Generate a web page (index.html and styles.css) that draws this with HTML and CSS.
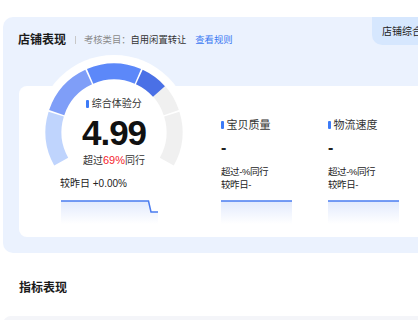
FILE: index.html
```html
<!DOCTYPE html>
<html lang="zh">
<head>
<meta charset="utf-8">
<title>店铺表现</title>
<link rel="stylesheet" href="styles.css">
</head>
<body>
<div class="page">
  <section class="panel">
    <div class="panel-head">
      <div class="head-left">
        <h2 class="title">店铺表现</h2>
        <span class="sep"></span>
        <span class="cat"><span class="cat-label">考核类目：</span>自用闲置转让</span>
        <a class="rule-link">查看规则</a>
      </div>
      <div class="tab">店铺综合</div>
    </div>
    <div class="card">
      <div class="gauge-col">
        <div class="gauge">
          <svg class="gauge-svg" width="154" height="118" viewBox="0 0 154 118">
            <circle cx="77" cy="77" r="77" fill="#ffffff"/>
            <g fill="none" stroke-width="16">
              <path d="M24.21 106.56 A60.5 60.5 0 0 1 19.22 59.06" stroke="#bfd4fd"/>
              <path d="M19.71 57.56 A60.5 60.5 0 0 1 51.67 22.06" stroke="#7f9ef8"/>
              <path d="M53.12 21.41 A60.5 60.5 0 0 1 100.88 21.41" stroke="#5c88f9"/>
              <path d="M102.33 22.06 A60.5 60.5 0 0 1 134.29 57.56" stroke="#f0f0f0"/>
              <path d="M102.33 22.06 A60.5 60.5 0 0 1 121.96 36.52" stroke="#4a70e6"/>
              <path d="M134.78 59.06 A60.5 60.5 0 0 1 129.79 106.56" stroke="#f0f0f0"/>
            </g>
          </svg>
          <div class="gauge-text">
            <div class="g-label"><span class="mark"></span>综合体验分</div>
            <div class="g-score">4.99</div>
            <div class="g-rank">超过<span class="red">69%</span>同行</div>
          </div>
        </div>
        <div class="delta">较昨日 +0.00%</div>
        <svg class="spark" width="100" height="27" viewBox="0 0 100 27">
          <defs>
            <linearGradient id="sg" x1="0" y1="0" x2="0" y2="1">
              <stop offset="0" stop-color="#4a7cf0" stop-opacity="0.16"/>
              <stop offset="1" stop-color="#4a7cf0" stop-opacity="0"/>
            </linearGradient>
          </defs>
          <path d="M0 4 H87.5 L90 15 H97 V27 H0 Z" fill="url(#sg)"/>
          <path d="M0 4 H87.5 L90 15 H97" fill="none" stroke="#4a7cf0" stroke-width="1.5"/>
        </svg>
      </div>
      <div class="metric">
        <div class="m-title"><span class="mark"></span>宝贝质量</div>
        <div class="m-value">-</div>
        <div class="m-line">超过-%同行</div>
        <div class="m-line">较昨日-</div>
        <svg class="m-chart" width="71" height="27" viewBox="0 0 71 27">
          <defs>
            <linearGradient id="mg1" x1="0" y1="0" x2="0" y2="1">
              <stop offset="0" stop-color="#4a7cf0" stop-opacity="0.16"/>
              <stop offset="1" stop-color="#4a7cf0" stop-opacity="0"/>
            </linearGradient>
          </defs>
          <path d="M0 4 H71 V27 H0 Z" fill="url(#mg1)"/>
          <path d="M0 4 H71" fill="none" stroke="#4a7cf0" stroke-width="1.5"/>
        </svg>
      </div>
      <div class="metric">
        <div class="m-title"><span class="mark"></span>物流速度</div>
        <div class="m-value">-</div>
        <div class="m-line">超过-%同行</div>
        <div class="m-line">较昨日-</div>
        <svg class="m-chart" width="71" height="27" viewBox="0 0 71 27">
          <defs>
            <linearGradient id="mg2" x1="0" y1="0" x2="0" y2="1">
              <stop offset="0" stop-color="#4a7cf0" stop-opacity="0.16"/>
              <stop offset="1" stop-color="#4a7cf0" stop-opacity="0"/>
            </linearGradient>
          </defs>
          <path d="M0 4 H71 V27 H0 Z" fill="url(#mg2)"/>
          <path d="M0 4 H71" fill="none" stroke="#4a7cf0" stroke-width="1.5"/>
        </svg>
      </div>
    </div>
  </section>
  <h3 class="section-title">指标表现</h3>
  <div class="grey-bar"></div>
</div>
</body>
</html>
```
FILE: styles.css
```css
html, body {
  margin: 0;
  padding: 0;
  background: #ffffff;
}
body {
  width: 418px;
  height: 320px;
  overflow: hidden;
  font-family: "Liberation Sans", "Noto Sans CJK SC", sans-serif;
  color: #333333;
}
.page {
  width: 418px;
}
.panel {
  margin: 17px 0 0 3px;
  width: 415px;
  box-sizing: border-box;
  padding: 0 0 16px 15px;
  background: #ebf2fe;
  border-radius: 10px 0 0 10px;
}
.panel-head {
  display: flex;
  justify-content: space-between;
  align-items: flex-start;
}
.head-left {
  display: flex;
  align-items: center;
  margin-top: 16px;
  height: 14px;
}
.title {
  margin: 0;
  font-size: 12px;
  line-height: 14px;
  font-weight: 700;
  color: #1a1a1a;
}
.sep {
  width: 1px;
  height: 8px;
  background: #c8c8c8;
  margin: 0 8px 0 9px;
}
.cat {
  font-size: 9.3px;
  line-height: 14px;
  color: #333333;
}
.cat-label {
  color: #8a8a8a;
}
.rule-link {
  margin-left: 9px;
  font-size: 9.3px;
  line-height: 14px;
  color: #3a78f2;
}
.tab {
  flex-shrink: 0;
  width: 46px;
  height: 28px;
  box-sizing: border-box;
  padding: 8px 0 0 10px;
  background: #d6e7fe;
  border-radius: 0 0 0 10px;
  font-size: 10px;
  line-height: 14px;
  color: #222222;
  white-space: nowrap;
  overflow: hidden;
}
.card {
  margin: 39px 0 0 1px;
  background: #ffffff;
  border-radius: 8px 0 0 8px;
  display: flex;
  align-items: flex-start;
  padding: 0 0 13px 18px;
}
.gauge-col {
  flex-shrink: 0;
  width: 154px;
  margin-top: -31px;
  display: flex;
  flex-direction: column;
}
.gauge {
  display: grid;
  width: 154px;
  height: 118px;
}
.gauge-svg,
.gauge-text {
  grid-area: 1 / 1;
}
.gauge-svg {
  display: block;
}
.gauge-text {
  padding-top: 42px;
  text-align: center;
}
.g-label {
  display: flex;
  align-items: center;
  justify-content: center;
  font-size: 10px;
  line-height: 14px;
  color: #333333;
}
.mark {
  display: inline-block;
  width: 2.5px;
  height: 8px;
  border-radius: 1px;
  background: #3d7bf7;
  margin-right: 3px;
}
.g-score {
  margin-top: 4px;
  font-size: 35px;
  line-height: 36px;
  font-weight: 700;
  letter-spacing: -1px;
  color: #111111;
}
.g-rank {
  margin-top: 2px;
  font-size: 10px;
  line-height: 14px;
  color: #333333;
}
.red {
  color: #f5222d;
  font-size: 11px;
}
.delta {
  margin: 4px 0 0 23px;
  font-size: 10px;
  line-height: 14px;
  color: #222222;
}
.spark {
  display: block;
  margin: 6px 0 0 24px;
}
.metric {
  flex-shrink: 0;
  width: 107px;
  margin-top: 32px;
  display: flex;
  flex-direction: column;
}
.gauge-col + .metric {
  margin-left: 30px;
}
.m-title {
  display: flex;
  align-items: center;
  font-size: 11px;
  line-height: 14px;
  color: #333333;
}
.m-value {
  margin-top: 9px;
  font-size: 16px;
  line-height: 14px;
  font-weight: 700;
  color: #222222;
}
.m-line {
  font-size: 9.5px;
  line-height: 13px;
  color: #222222;
  letter-spacing: -0.4px;
}
.m-value + .m-line {
  margin-top: 10px;
}
.m-chart {
  display: block;
  margin-top: 6px;
}
.section-title {
  margin: 27px 0 0 19px;
  font-size: 12px;
  line-height: 16px;
  font-weight: 700;
  color: #1a1a1a;
}
.grey-bar {
  margin: 20px 0 0 3px;
  height: 20px;
  background: #f4f5f9;
  border-radius: 8px 0 0 0;
}
```
